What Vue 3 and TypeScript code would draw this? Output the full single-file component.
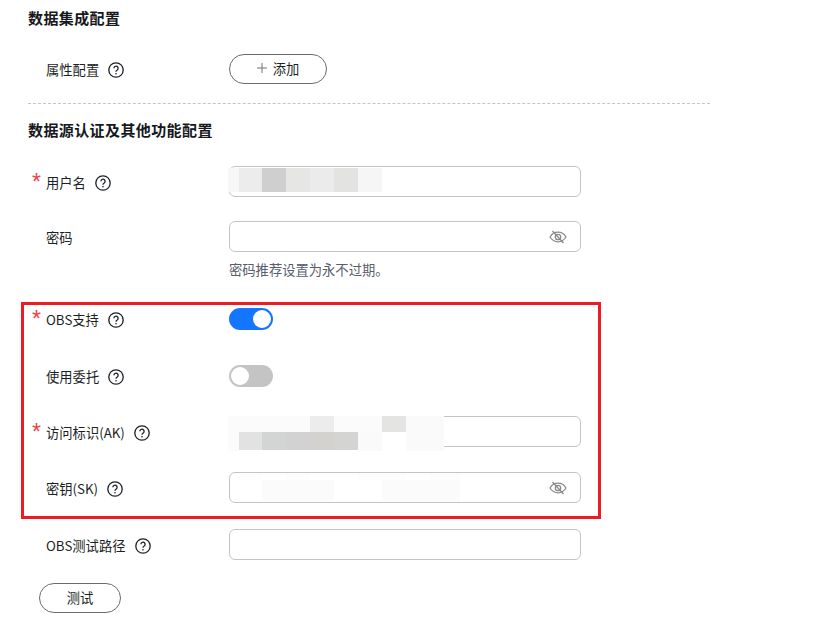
<script setup lang="ts">
interface Block {
  x: number
  y: number
  w: number
  h: number
  c: string
}

// pixelated cover over the values, coordinates relative to the input box
const userMosaic: Block[] = [
  { x: -2, y: 1, w: 11, h: 24, c: '#f7f7f7' },
  { x: 9, y: 1, w: 23, h: 24, c: '#ececec' },
  { x: 32, y: 1, w: 24, h: 24, c: '#cfcfcf' },
  { x: 56, y: 1, w: 24, h: 24, c: '#e6e6e5' },
  { x: 80, y: 1, w: 24, h: 24, c: '#ebebeb' },
  { x: 104, y: 1, w: 24, h: 24, c: '#e3e3e2' },
  { x: 128, y: 1, w: 24, h: 24, c: '#f6f6f6' },
]

const akMosaic: Block[] = [
  { x: -2, y: -1, w: 82, h: 16, c: '#fbfbfb' },
  { x: 80, y: -1, w: 24, h: 16, c: '#ececec' },
  { x: 104, y: -1, w: 48, h: 16, c: '#fbfbfb' },
  { x: 152, y: -1, w: 24, h: 16, c: '#e4e4e2' },
  { x: 176, y: -1, w: 38, h: 16, c: '#fafafa' },
  { x: -2, y: 15, w: 11, h: 19, c: '#fbfbfb' },
  { x: 9, y: 15, w: 23, h: 18, c: '#e2e2e2' },
  { x: 32, y: 15, w: 24, h: 18, c: '#d3d5d4' },
  { x: 56, y: 15, w: 24, h: 18, c: '#d2d2d2' },
  { x: 80, y: 15, w: 24, h: 18, c: '#d3d2ce' },
  { x: 104, y: 15, w: 24, h: 18, c: '#d4d4d2' },
  { x: 128, y: 15, w: 24, h: 19, c: '#fafafa' },
  { x: 152, y: 15, w: 24, h: 19, c: '#ffffff' },
  { x: 176, y: 15, w: 38, h: 19, c: '#fafafa' },
]

const skMosaic: Block[] = [
  { x: 9, y: 0, w: 23, h: 7, c: '#fdfdfd' },
  { x: 56, y: 0, w: 24, h: 7, c: '#fdfdfd' },
  { x: 128, y: 0, w: 48, h: 7, c: '#fdfdfd' },
  { x: 200, y: 0, w: 30, h: 7, c: '#fdfdfd' },
  { x: 32, y: 7, w: 72, h: 21, c: '#fbfbfb' },
  { x: 152, y: 7, w: 78, h: 21, c: '#fbfbfb' },
]

const blockStyle = (b: Block) => ({
  left: `${b.x}px`,
  top: `${b.y}px`,
  width: `${b.w}px`,
  height: `${b.h}px`,
  background: b.c,
})
</script>

<template>
  <div class="page">
    <svg class="defs" aria-hidden="true">
      <symbol id="icon-help" viewBox="0 0 16 16">
        <circle cx="8" cy="8" r="7.2" />
        <path d="M5.9 6.3a2.1 2.1 0 1 1 3.3 1.7c-.8.5-1.2.9-1.2 1.8" />
        <circle cx="8" cy="11.8" r=".8" fill="currentColor" stroke="none" />
      </symbol>
      <symbol id="icon-eye" viewBox="0 0 18 16">
        <path d="M1 8c2-3.2 4.7-4.8 8-4.8s6 1.6 8 4.8c-2 3.2-4.7 4.8-8 4.8S3 11.2 1 8z" />
        <circle cx="9" cy="8" r="2.7" />
        <path d="M3.5 2l11 12" />
      </symbol>
    </svg>

    <h3 class="title">数据集成配置</h3>

    <div class="row row-add">
      <div class="label">属性配置<svg class="help"><use href="#icon-help" /></svg></div>
      <button class="btn btn-add" type="button">
        <svg class="plus" viewBox="0 0 10 10"><path d="M5 0v10M0 5h10" /></svg>添加
      </button>
    </div>

    <div class="divider"></div>

    <h3 class="title title-second">数据源认证及其他功能配置</h3>

    <div class="row row-user">
      <div class="label required">用户名<svg class="help"><use href="#icon-help" /></svg></div>
      <div class="input">
        <i v-for="(b, i) in userMosaic" :key="i" class="block" :style="blockStyle(b)"></i>
      </div>
    </div>

    <div class="row row-password">
      <div class="label">密码</div>
      <div class="input">
        <svg class="eye"><use href="#icon-eye" /></svg>
      </div>
    </div>
    <p class="hint">密码推荐设置为永不过期。</p>

    <div class="row row-obs">
      <div class="label required">OBS支持<svg class="help"><use href="#icon-help" /></svg></div>
      <span class="switch on"><i class="knob"></i></span>
    </div>

    <div class="row row-agency">
      <div class="label">使用委托<svg class="help"><use href="#icon-help" /></svg></div>
      <span class="switch"><i class="knob"></i></span>
    </div>

    <div class="row row-ak">
      <div class="label required">访问标识(AK)<svg class="help"><use href="#icon-help" /></svg></div>
      <div class="input">
        <i v-for="(b, i) in akMosaic" :key="i" class="block" :style="blockStyle(b)"></i>
      </div>
    </div>

    <div class="row row-sk">
      <div class="label">密钥(SK)<svg class="help"><use href="#icon-help" /></svg></div>
      <div class="input">
        <i v-for="(b, i) in skMosaic" :key="i" class="block" :style="blockStyle(b)"></i>
        <svg class="eye"><use href="#icon-eye" /></svg>
      </div>
    </div>

    <div class="row row-path">
      <div class="label">OBS测试路径<svg class="help"><use href="#icon-help" /></svg></div>
      <div class="input"></div>
    </div>

    <button class="btn btn-test" type="button">测试</button>

    <!-- red annotation frame drawn over the form -->
    <div class="annotation"></div>
  </div>
</template>

<style>
html,
body {
  background: #fff;
}
</style>

<style scoped>
.page {
  position: relative;
  box-sizing: border-box;
  width: 829px;
  height: 626px;
  padding: 8px 0 0 28px;
  overflow: hidden;
  background: #fff;
  color: #1c1f26;
  font-family: "Noto Sans CJK SC", "Liberation Sans", sans-serif;
  font-size: 13.3px;
}

.defs {
  position: absolute;
  width: 0;
  height: 0;
}

.title {
  margin: 0;
  height: 20px;
  line-height: 20px;
  font-size: 15px;
  font-weight: 700;
  letter-spacing: 0.4px;
  color: #16181d;
}

.title-second {
  margin-top: 16px;
}

.divider {
  width: 682px;
  margin-top: 19px;
  border-top: 1px dashed #c4c4c4;
}

.row {
  display: flex;
  align-items: center;
}

.row-add {
  margin-top: 26px;
  height: 30px;
}

.row-user {
  margin-top: 26px;
}

.row-password {
  margin-top: 24px;
}

.row-obs {
  margin-top: 29px;
}

.row-agency {
  margin-top: 35px;
}

.row-ak {
  margin-top: 29px;
}

.row-sk {
  margin-top: 25px;
}

.row-path {
  margin-top: 26px;
}

.label {
  position: relative;
  display: flex;
  align-items: center;
  flex: none;
  box-sizing: border-box;
  width: 201px;
  margin-top: 2px;
  padding-left: 18px;
  line-height: 20px;
}

.required::before {
  content: "*";
  position: absolute;
  left: 4px;
  top: -1px;
  color: #f0404a;
  font-family: "Liberation Sans", sans-serif;
  font-size: 23px;
  line-height: 20px;
}

.help {
  flex: none;
  width: 16px;
  height: 16px;
  margin-left: 9px;
  fill: none;
  color: #1c1f26;
  stroke: currentColor;
  stroke-width: 1.3;
}

.input {
  position: relative;
  flex: none;
  box-sizing: border-box;
  width: 352px;
  height: 31px;
  border: 1px solid #c4c4c4;
  border-radius: 6px;
  background: #fff;
}

.block {
  position: absolute;
  display: block;
}

.eye {
  position: absolute;
  right: 13px;
  top: 7px;
  width: 18px;
  height: 16px;
  fill: none;
  stroke: #8a8a8a;
  stroke-width: 1.3;
}

.hint {
  margin: 8px 0 0 201px;
  line-height: 19px;
  color: #575d6c;
}

.switch {
  position: relative;
  display: block;
  flex: none;
  width: 44px;
  height: 22px;
  border-radius: 11px;
  background: #c4c4c4;
}

.switch.on {
  background: #1476ff;
}

.knob {
  position: absolute;
  left: 2px;
  top: 2px;
  width: 18px;
  height: 18px;
  border-radius: 50%;
  background: #fff;
}

.switch.on .knob {
  left: 24px;
}

.btn {
  display: flex;
  align-items: center;
  justify-content: center;
  box-sizing: border-box;
  height: 30px;
  padding: 0 0 2px;
  border: 1px solid #6b6b6b;
  border-radius: 15px;
  background: #fff;
  color: #1c1f26;
  font: inherit;
}

.btn-add {
  width: 98px;
}

.plus {
  width: 10px;
  height: 10px;
  margin-right: 6px;
  fill: none;
  stroke: #77707a;
  stroke-width: 1;
}

.btn-test {
  width: 82px;
  margin: 23px 0 0 11px;
}

.annotation {
  position: absolute;
  left: 21px;
  top: 302px;
  box-sizing: border-box;
  width: 580px;
  height: 217px;
  border: 3px solid #ed1c24;
  pointer-events: none;
}
</style>
